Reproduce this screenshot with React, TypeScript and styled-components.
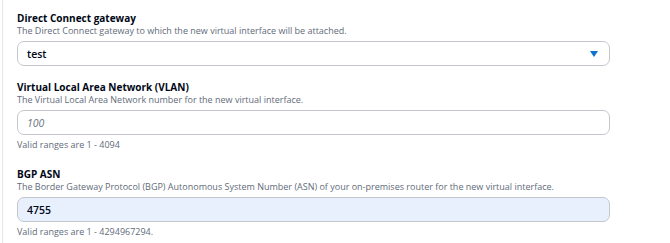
import styled, { createGlobalStyle } from 'styled-components';

const GlobalStyle = createGlobalStyle`
  html, body {
    margin: 0;
    padding: 0;
    background: #ffffff;
    font-family: "Open Sans", "Noto Sans", sans-serif;
  }
`;

const Panel = styled.div`
  margin-left: 2px;
  border-left: 1px solid #e3e5e8;
  padding: 12px 0 0 14px;
  min-height: 243px;
  box-sizing: border-box;
`;

const Field = styled.div`
  display: flex;
  flex-direction: column;
  width: 593px;
  margin-bottom: 15px;
`;

const Label = styled.label`
  font-size: 10px;
  line-height: 13px;
  font-weight: 700;
  color: #000716;
`;

const Description = styled.div`
  font-size: 9px;
  line-height: 12px;
  color: #5f6b7a;
`;

const Control = styled.div<{ $filled?: boolean }>`
  margin-top: 4px;
  height: 25px;
  box-sizing: border-box;
  border: 1px solid #c3c7cc;
  border-radius: 7px;
  background: ${p => (p.$filled ? '#e8f0fe' : '#ffffff')};
  display: flex;
  align-items: center;
  justify-content: space-between;
  padding: 0 11px 0 9px;
`;

const Value = styled.span<{ $placeholder?: boolean }>`
  font-size: 10.5px;
  font-weight: ${p => (p.$placeholder ? 400 : 600)};
  font-style: ${p => (p.$placeholder ? 'italic' : 'normal')};
  color: ${p => (p.$placeholder ? '#6b7480' : '#000716')};
`;

const Caret = styled.span`
  width: 0;
  height: 0;
  border-left: 4px solid transparent;
  border-right: 4px solid transparent;
  border-top: 6px solid #0972d3;
`;

const Helper = styled.div`
  margin-top: 4px;
  font-size: 9px;
  line-height: 12px;
  color: #5f6b7a;
  margin-bottom: 2px;
`;

const App = () => (
  <>
    <GlobalStyle />
    <Panel>
      <Field>
        <Label>Direct Connect gateway</Label>
        <Description>The Direct Connect gateway to which the new virtual interface will be attached.</Description>
        <Control>
          <Value>test</Value>
          <Caret />
        </Control>
      </Field>
      <Field>
        <Label>Virtual Local Area Network (VLAN)</Label>
        <Description>The Virtual Local Area Network number for the new virtual interface.</Description>
        <Control>
          <Value $placeholder>100</Value>
        </Control>
        <Helper>Valid ranges are 1 - 4094</Helper>
      </Field>
      <Field>
        <Label>BGP ASN</Label>
        <Description>
          The Border Gateway Protocol (BGP) Autonomous System Number (ASN) of your on-premises router for the new virtual interface.
        </Description>
        <Control $filled>
          <Value>4755</Value>
        </Control>
        <Helper>Valid ranges are 1 - 4294967294.</Helper>
      </Field>
    </Panel>
  </>
);

export default App;
